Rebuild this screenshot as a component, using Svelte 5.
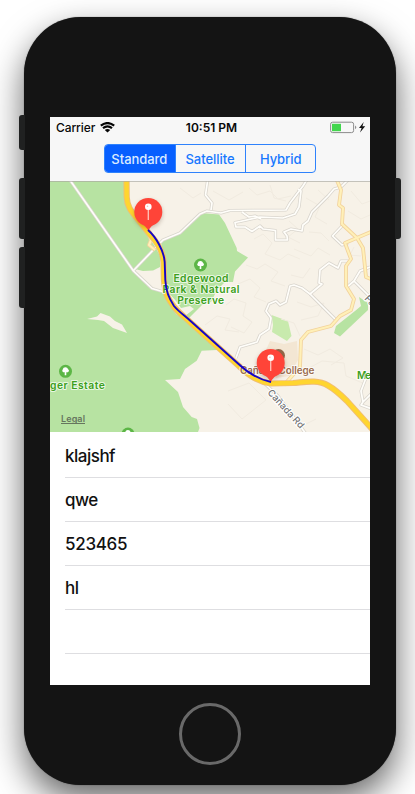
<script>
  const modes = ['Standard', 'Satellite', 'Hybrid'];
  let selected = $state('Standard');
  const rows = ['klajshf', 'qwe', '523465', 'hl', ''];

  const highway =
    'M126.5 178 L126.7 197 C127 206 131 211 136 217 L150 234.5 C157 242 163 252 163.5 262 L164 280 C165 294 168 299 175 308 C179 313 186 318 191 323 L239 366 C248 375 259 382 271 383.5 L293 383 C303 382.5 317 379 328 385.5 C336 390 341 395 347 401 L374 431';
  const route =
    'M148 230 C156 237 164 251 164.7 262 L165.3 280 C166 292 169 298 174 306 C178 311 185 316 190 320.5 L238 363.5 C248 373 257 379 271 382';

  const minorRoads = [
    'M68.5 178 L133.5 271 L152 288.5 L164 292',
    'M133.5 270.5 L158 245 L163 240 L180 233 L200 214 L207 211 L221 213 L230 210.5 L286 210 L290 203 L303 186 L308 178',
    'M208 178 L205.5 195 L212 203 L211 210',
    'M298 189 L301 191 L299 207 L295 214 L283 218 L260 217 L240 221.5 L235 222.5 L236 227 L245 227 L252 231.5 L260 226 L263 229 L275.5 230.5 L275.5 240 L287.5 240 L287 236 L284 232 L291 229 L302 231 L303 225 L308 221 L312 212 L328 196 L334 189 L341 187 L350 178',
    'M261 219 L255 216 L249 217 L242 212',
    'M342 226 L332.5 236 L342 245 L348 243',
    'M348 261 L341 261 L338 268 L329 263 L320 270 L319 283 L322 284 L310 294 L302 288 L294 285 L290 286 L286 302 L280 305 L276 301 L269 304 L266 311 L271 318 L269 329 L260 335 L257 342 L240 347 L236 358',
    'M310 294 L335 319 M347 287 L354 281 L360 271 L370 267 M354 281 L370 297',
    'M164 292 L177 313 L190 320',
    'M262 381 L278 396 L306 434',
    'M372 393 L363 402 L361 405 L372 409 M366 378 L361 391 L363 402'
  ];
  const localRoads = [
    'M336 178 L341 190 L339 205 L343 208 L342 224 L357 238 L363 248 L366 277 L373 280',
    'M373 231 L345 243 L351 259 L346 266 L346 286 L354 299 L351 310 L340 316 L331 326 L308 332 L301 340 L300 367 L284 385',
    'M149 235 L151 240 L149 245 L155 250'
  ];
  const contours =
    'M249 188 l8 7 13-4 8 8 13-3 M270 185 l4 13 12 3 M306 198 l14 8 -5 11 12 7 M318 190 l11 10 M289 221 l9 8 -10 8 12 6 M254 239 l9-5 9 9 -7 11 15 6 8-6 12 5 M246 265 l11 4 8-5 13 8 -7 9 14 5 M294 249 l17 7 7-8 12 7 M238 284 l12-5 10 9 -6 9 12 5 M205 325 l12-9 13 3 -5 11 14 2 M226 305 l8-6 12 4 -3 13 9 6 -8 11 -13-6 M297 302 l14 5 13-4 -6 13 -17 4 M310 268 l-7 10 -12-3 M351 191 l11 13 8-3 M348 211 l13 8 9-4 M309 232 l12 1 8 8 M354 247 l-4 8 11 1 M304 349 l14 6 12-6 13 9 -12 7 M309 368 l13-7 22 2 2 13 19 8 M228 391 l21-8 17 17 -24 19 -14-15 M282 407 l20 19 14-7 M281 319 l13 4 6 13 M180 188 l13 10 8-5 M213 191 l16 9 14-8';
  const parks = [
    { x: 200.5, y: 265 },
    { x: 65.5, y: 371.3 },
    { x: 128, y: 434 }
  ];
  const pins = [
    { x: 148.3, y: 212, tip: 231 },
    { x: 270.7, y: 363, tip: 382.5 }
  ];
</script>

<main class="stage">
  <div class="phone">
    <i class="key mute"></i>
    <i class="key up"></i>
    <i class="key down"></i>
    <i class="key power"></i>
    <div class="screen">
      <header>
        <div class="status">
          <div class="carrier">
            <span>Carrier</span>
            <svg width="15" height="11" viewBox="0 0 15 11">
              <path d="M.8 3.7 Q7.5 -1.6 14.2 3.7 M3 6.2 Q7.5 2.6 12 6.2" fill="none" stroke="#050505" stroke-width="2.2" />
              <path d="M4.8 8 Q7.5 5.9 10.2 8 L7.5 10.6Z" fill="#050505" />
            </svg>
          </div>
          <time>10:51 PM</time>
          <div class="power-state">
            <svg width="37" height="13" viewBox="0 0 37 13">
              <rect x=".6" y="1.2" width="23" height="10.4" rx="2" fill="none" stroke="#8c8c8c" />
              <rect x="2" y="2.8" width="9" height="7.4" fill="#42d64d" />
              <path d="M25.2 4.5 Q27.4 6.3 25.2 8.3Z" fill="#777" />
              <path d="M33.7 1 L29 7.1 H31.6 L30 11.4 L35.2 5.3 H32.4Z" fill="#111" />
            </svg>
          </div>
        </div>
        <div class="segments">
          {#each modes as mode}
            <button class:active={selected === mode} onclick={() => (selected = mode)}>{mode}</button>
          {/each}
        </div>
      </header>

      <svg class="map" viewBox="50 181 320 251" width="320" height="251">
        <rect x="50" y="181" width="320" height="251" fill="#f7f2e8" />
        <g fill="#b7e3a2">
          <path d="M50 181H125V199C127 208 131 214 137 220L156 248 160 256V267L153 270.5 143 271 137 269.5 133.5 271 152 289 165 293 175 309 218 347 216.7 350 201.7 350.7 196.7 360.7 185 369 180 379 165 380 178 392 183 407 191.7 417 197 419 199.5 428 198 432H50Z" />
          <path d="M161 242L180 234 201 213 219 214.5 225 223 236.7 248 237 251 248 257.6 235 271.6 233 282 225 282 217 290 211 302 202 305 188 319 185 316 194 309 190 306 181 308 176 301 168 292 166 280 164 257Z" />
          <path d="M271.5 315L288 321 291.5 336 287 341 272 332 273 325Z" fill="#c8eaad" />
          <path d="M359 297L365 301 368 303V310L340 336.5 334 333 336 326 355 311 361 306Z" />
        </g>
        <path d="M87 319L97 316.5 100.5 313 110 316.5 115 321 122 324.5 127 333 113 328 104 321 98 320Z" fill="#f7f2e8" />
        <path d="M266 350L270 341 284 344 297 341 298 360 289 376 276 378Z" fill="#f3e6d3" />
        <path d={contours} fill="none" stroke="#f1ebe0" />
        <g fill="none" stroke-linejoin="round">
          {#each minorRoads as d}<path {d} stroke="#d9d5cd" stroke-width="3.2" />{/each}
          {#each minorRoads as d}<path {d} stroke="#fffefa" stroke-width="1.7" />{/each}
          {#each localRoads as d}<path {d} stroke="#f2d29c" stroke-width="3.8" />{/each}
          {#each localRoads as d}<path {d} stroke="#fff0b8" stroke-width="2.1" />{/each}
          <path d={highway} stroke="#f0bd75" stroke-width="6.2" />
          <path d={highway} stroke="#ffd52f" stroke-width="4.4" />
        </g>

        {#each parks as p}
          <g transform="translate({p.x} {p.y})">
            <circle r="6.5" fill="#5cb646" />
            <path d="M-.8 4V1H-2.3A1.9 1.9 0 0 1-2.8-1.8A2.8 2.8 0 0 1 2.6-2A1.9 1.9 0 0 1 2.4 1H.8V4Z" fill="#fff" />
          </g>
        {/each}
        <g class="place">
          <text x="173.5" y="282" textLength="55">Edgewood</text>
          <text x="162.5" y="293" textLength="77">Park &amp; Natural</text>
          <text x="177.2" y="304" textLength="47">Preserve</text>
          <text x="50" y="389" textLength="54.8">ger Estate</text>
          <text x="357" y="379.3" textLength="14">Me</text>
          <text class="college" x="240" y="373.5" textLength="74.5">Cañada College</text>
        </g>
        <g class="street">
          <text transform="translate(267 393) rotate(47.5)" textLength="49">Cañada Rd</text>
          <text transform="translate(364 299) rotate(46)">Fa</text>
        </g>
        <text class="legal" x="61" y="422" textLength="24">Legal</text>
        <path d="M61 423.5H85" stroke="#66755e" />

        <circle cx="278.5" cy="355.5" r="6.5" fill="#936747" />
        {#each pins as pin}
          <ellipse class="shade" cx={pin.x} cy={pin.y + 2} rx="14" ry="14" />
          <path d="M{pin.x - 9} {pin.y + 10} Q{pin.x - 2} {pin.y + 14} {pin.x} {pin.tip} Q{pin.x + 2} {pin.y + 14} {pin.x + 9} {pin.y + 10}Z" fill="#ff4438" />
          <circle cx={pin.x} cy={pin.y} r="14" fill="#ff4438" />
          <path d="M{pin.x} {pin.y - 3} V{pin.y + 8}" stroke="#ffc3b9" stroke-width="1.3" />
          <circle cx={pin.x} cy={pin.y - 5.3} r="3.3" fill="#fff" />
          <circle cx={pin.x - 0.8} cy={pin.y - 5.8} r=".8" fill="#ffb7af" />
        {/each}
        <path d={route} fill="none" stroke="#1505c8" stroke-width="1.9" />
        <path d="M50 181.5H370" stroke="#a9a8a2" stroke-opacity=".65" />
      </svg>

      <ul>
        {#each rows as row}<li>{row}</li>{/each}
      </ul>
    </div>
    <div class="home"></div>
  </div>
</main>

<style>
  :global(body) { margin: 0; background: #fff; }
  .stage {
    box-sizing: border-box;
    width: 415px;
    height: 794px;
    overflow: hidden;
    padding: 17px 19px 0 24px;
    font-family: Inter, "Liberation Sans", sans-serif;
  }
  .phone {
    position: relative;
    box-sizing: border-box;
    width: 372px;
    height: 768px;
    padding-top: 100px;
    display: flex;
    flex-direction: column;
    align-items: center;
    border-radius: 57px;
    background: #141414;
    box-shadow: 0 15px 34px rgba(0, 0, 0, .6), 0 0 1px #555;
  }
  .key { position: absolute; left: -5px; width: 6px; border-radius: 3px 0 0 3px; background: #202121; }
  .mute { top: 98px; height: 35px; }
  .up { top: 161px; height: 61px; }
  .down { top: 230px; height: 61px; }
  .power { top: 161px; height: 61px; left: auto; right: -5px; border-radius: 0 3px 3px 0; }
  .screen { width: 320px; height: 568px; flex: none; overflow: hidden; background: #fff; }
  header { height: 64px; background: #f7f7f7; }
  .status { display: grid; grid-template-columns: 1fr auto 1fr; height: 20px; align-items: center; font-size: 12px; color: #080808; }
  .carrier { display: flex; align-items: center; gap: 5px; padding-left: 6px; letter-spacing: -.1px; font-weight: 450; }
  time { font-weight: 600; padding-left: 3px; }
  .power-state { display: flex; justify-content: flex-end; padding-right: 3px; }
  svg { display: block; }
  .segments {
    box-sizing: border-box;
    display: flex;
    width: 212px;
    height: 29px;
    margin: 7px auto 0;
    border: 1px solid #2e82fc;
    border-radius: 4px;
    overflow: hidden;
  }
  button {
    flex: 1;
    padding: 0 1px 0 0;
    border: 0;
    border-right: 1px solid #2e82fc;
    background: transparent;
    color: #1778ff;
    font: 450 13px Inter, sans-serif;
    letter-spacing: -.05px;
  }
  button:last-child { border-right: 0; padding: 0; }
  button.active { background: #075fff; color: #dcecff; }
  .place { font-size: 10.3px; font-weight: 600; fill: #3c9f20; stroke: #fff; stroke-width: 2px; paint-order: stroke; stroke-linejoin: round; stroke-opacity: .7; }
  .college { fill: #9a6c4e; font-size: 10px; }
  .street { font-size: 9.5px; font-weight: 500; fill: #727272; stroke: #fff; stroke-width: 2px; paint-order: stroke; }
  .legal { font-size: 9px; font-weight: 600; fill: #66755e; }
  .shade { fill: rgba(60, 20, 0, .25); filter: blur(2px); }
  ul { margin: 0; padding: 2px 0 0 15px; list-style: none; }
  li { box-sizing: border-box; height: 44px; border-bottom: 1px solid #dedee1; color: #111; font-size: 17px; font-weight: 450; line-height: 45px; letter-spacing: -.5px; }
  li:nth-child(3) { letter-spacing: -.3px; }
  .home { box-sizing: border-box; width: 62px; height: 62px; margin-top: 18px; border: 3px solid #696969; border-radius: 50%; }
</style>
